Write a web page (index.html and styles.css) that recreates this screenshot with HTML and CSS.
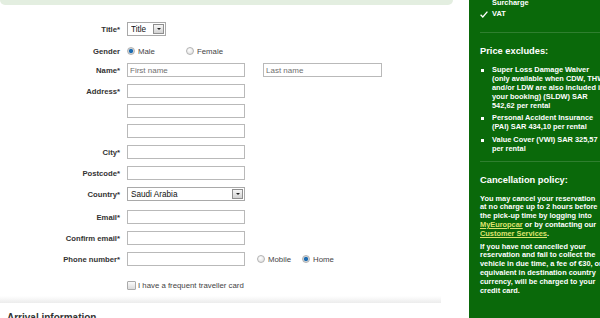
FILE: index.html
```html
<!DOCTYPE html>
<html lang="en">

<head>
    <meta charset="UTF-8">
    <meta name="viewport" content="width=device-width, initial-scale=1.0">
    <title>Europcar - Driver details</title>
    <link rel="stylesheet" href="styles.css">
</head>

<body>
    <div class="page">
        <div class="main">
            <div class="notice"></div>

            <form class="driver-form">
                <div class="row row-title">
                    <label class="lbl" for="title">Title*</label>
                    <div class="select select-title">
                        <select id="title">
                            <option>Title</option>
                            <option>Mr</option>
                            <option>Mrs</option>
                        </select>
                        <span class="select-btn"></span>
                    </div>
                </div>
                <div class="row row-gender">
                    <span class="lbl">Gender</span>
                    <label class="choice choice-male"><input type="radio" name="gender" checked> Male</label>
                    <label class="choice"><input type="radio" name="gender"> Female</label>
                </div>
                <div class="row">
                    <label class="lbl" for="firstName">Name*</label>
                    <input type="text" id="firstName" placeholder="First name">
                    <input type="text" id="lastName" class="last-name" placeholder="Last name">
                </div>
                <div class="row row-tight">
                    <label class="lbl" for="address1">Address*</label>
                    <input type="text" id="address1">
                </div>
                <div class="row row-tight">
                    <span class="lbl"></span>
                    <input type="text" id="address2">
                </div>
                <div class="row">
                    <span class="lbl"></span>
                    <input type="text" id="address3">
                </div>
                <div class="row">
                    <label class="lbl" for="city">City*</label>
                    <input type="text" id="city">
                </div>
                <div class="row">
                    <label class="lbl" for="postcode">Postcode*</label>
                    <input type="text" id="postcode">
                </div>
                <div class="row row-country">
                    <label class="lbl" for="country">Country*</label>
                    <div class="select select-country">
                        <select id="country">
                            <option>Saudi Arabia</option>
                        </select>
                        <span class="select-btn"></span>
                    </div>
                </div>
                <div class="row">
                    <label class="lbl" for="email">Email*</label>
                    <input type="email" id="email">
                </div>
                <div class="row">
                    <label class="lbl" for="confirmEmail">Confirm email*</label>
                    <input type="email" id="confirmEmail">
                </div>
                <div class="row">
                    <label class="lbl" for="phone">Phone number*</label>
                    <input type="tel" id="phone">
                    <label class="choice choice-mobile"><input type="radio" name="phoneType"> Mobile</label>
                    <label class="choice"><input type="radio" name="phoneType" checked> Home</label>
                </div>
                <div class="row row-check">
                    <span class="lbl"></span>
                    <label class="choice"><input type="checkbox"> I have a frequent traveller card</label>
                </div>
            </form>

            <div class="divider"></div>
            <h2 class="section-title">Arrival information</h2>
        </div>

        <aside class="summary">
            <ul class="included">
                <li>
                    <svg class="tick" width="8" height="7" viewBox="0 0 8 7"><path d="M0.6 3.8 L2.8 6 L7.4 0.6" fill="none" stroke="#fff" stroke-width="1.3"/></svg>
                    <span>Airport/Railway Station Surcharge</span>
                </li>
                <li>
                    <svg class="tick" width="8" height="7" viewBox="0 0 8 7"><path d="M0.6 3.8 L2.8 6 L7.4 0.6" fill="none" stroke="#fff" stroke-width="1.3"/></svg>
                    <span>VAT</span>
                </li>
            </ul>

            <div class="block">
                <h3>Price excludes:</h3>
                <ul class="excludes">
                    <li>Super Loss Damage Waiver (only available when CDW, THW and/or LDW are also included in your booking) (SLDW) SAR 542,62 per rental</li>
                    <li>Personal Accident Insurance (PAI) SAR 434,10 per rental</li>
                    <li>Value Cover (VWI) SAR 325,57 per rental</li>
                </ul>
            </div>

            <div class="block">
                <h3>Cancellation policy:</h3>
                <p>You may cancel your reservation at no charge up to 2 hours before the pick-up time by logging into <a href="#">MyEuropcar</a> or by contacting our <a href="#">Customer Services</a>.</p>
                <p>If you have not cancelled your reservation and fail to collect the vehicle in due time, a fee of €30, or equivalent in destination country currency, will be charged to your credit card.</p>
            </div>
        </aside>
    </div>
</body>

</html>
```

FILE: styles.css
```css
body {
    margin: 0;
    font-family: "Liberation Sans", Arial, sans-serif;
    background: #fff;
    overflow: hidden;
}

.page {
    display: flex;
    align-items: flex-start;
    gap: 16px;
}

.main {
    flex: none;
    width: 453px;
}

.notice {
    height: 5px;
    background: #e3eee0;
    border-radius: 0 0 5px 5px;
}

/* form */

.driver-form {
    padding-top: 17px;
}

.row {
    display: flex;
    align-items: center;
    height: 14px;
    margin-bottom: 7px;
}

.row-title {
    margin-bottom: 8px;
}

.row-gender {
    margin-bottom: 5px;
}

.row-tight {
    margin-bottom: 6px;
}

.row-country {
    margin-bottom: 9px;
}

.row-check {
    height: 10px;
    margin-top: 14px;
    margin-bottom: 0;
}

.lbl {
    flex: none;
    width: 120px;
    margin-right: 7px;
    text-align: right;
    font-size: 7.7px;
    font-weight: bold;
    color: #333;
}

input[type="text"],
input[type="email"],
input[type="tel"] {
    width: 118px;
    height: 14px;
    box-sizing: border-box;
    margin: 0;
    padding: 0 2px;
    border: 1px solid #b9b9b9;
    font-family: inherit;
    font-size: 8px;
    color: #333;
}

input::placeholder {
    color: #707070;
}

.last-name {
    margin-left: 18px !important;
    width: 119px !important;
}

.select {
    display: flex;
    align-items: center;
    height: 14px;
    box-sizing: border-box;
    border: 1px solid #a9a9a9;
    background: #fff;
}

.select-title {
    width: 39px;
}

.select-country {
    width: 118px;
}

.select select {
    appearance: none;
    -webkit-appearance: none;
    flex: 1;
    min-width: 0;
    height: 12px;
    border: 0;
    padding: 0 0 0 3px;
    background: transparent;
    font-family: inherit;
    font-size: 8.2px;
    color: #111;
}

.select-btn {
    flex: none;
    display: flex;
    align-items: center;
    justify-content: center;
    width: 11px;
    height: 10px;
    box-sizing: border-box;
    margin-right: 1px;
    border: 1px solid #8f8f8f;
    background: linear-gradient(#f6f6f6, #d2d2d2);
}

.select-btn::after {
    content: "";
    border-left: 2.5px solid transparent;
    border-right: 2.5px solid transparent;
    border-top: 2.5px solid #222;
}

.choice {
    display: flex;
    align-items: center;
    font-size: 7.8px;
    color: #444;
}

.choice-male {
    width: 59px;
}

.choice-mobile {
    width: 45px;
    margin-left: 12px;
}

.choice input {
    appearance: none;
    -webkit-appearance: none;
    flex: none;
    width: 8px;
    height: 8px;
    margin: 0 3px 0 0;
    border: 1px solid #b3b3b3;
    border-radius: 50%;
    background: radial-gradient(circle at 40% 35%, #fff, #d9d9d9);
}

.choice input:checked {
    background: radial-gradient(circle, #1d6db3 0 1.8px, #cfd4d8 2.4px);
}

.choice input[type="checkbox"] {
    width: 9px;
    height: 9px;
    margin-right: 2px;
    border-radius: 1px;
    border-color: #aaa;
    background: linear-gradient(#fafafa, #dcdcdc);
}

.divider {
    width: 441px;
    height: 7px;
    margin-top: 6px;
    background: linear-gradient(#fff, #ececec);
}

.section-title {
    margin: 9px 0 0 7px;
    font-size: 10px;
    line-height: 12px;
    color: #333;
}

/* right summary panel */

.summary {
    flex: none;
    width: 127px;
    min-height: 330px;
    padding: 0 11px;
    background: #0a690a;
    color: #fff;
    font-size: 7.4px;
    font-weight: bold;
    line-height: 8.8px;
}

.summary ul {
    list-style: none;
    margin: 0;
    padding: 0;
}

.included {
    margin-top: -10px !important;
    padding-bottom: 12px !important;
}

.included li {
    display: flex;
    margin-bottom: 2px;
}

.tick {
    flex: none;
    margin: 1px 4px 0 0;
}

.included span {
    width: 115px;
}

.block {
    border-top: 1px solid #2f7f2f;
    padding: 13px 0 7px;
}

.block h3 {
    margin: 0 0 9px;
    font-size: 9.3px;
    line-height: 11px;
}

.excludes li {
    display: flex;
    margin-bottom: 4px;
}

.excludes li:last-child {
    margin-bottom: 0;
}

.excludes li::before {
    content: "";
    flex: none;
    width: 3px;
    height: 3px;
    margin: 3px 8px 0 1px;
    background: #fff;
}

.block p {
    width: 123px;
    margin: 0 0 4px;
}

.block a {
    color: #dfe36e;
}
```
